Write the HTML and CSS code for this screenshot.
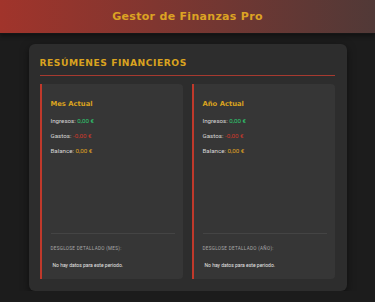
FILE: index.html
```html
<!DOCTYPE html>
<html>
<head>
    <title>Gestor de Finanzas Pro</title>
    <link rel="stylesheet" href="styles.css">
</head>
<body>

<header class="top-bar">
    <h1>Gestor de Finanzas Pro</h1>
</header>

<div class="container">
    <section class="card">
        <h2>Resúmenes Financieros</h2>

        <div class="summary-grid">
            <!-- Resumen del mes -->
            <div class="summary">
                <h3>Mes Actual</h3>
                <p>Ingresos: <span class="income">0,00 €</span></p>
                <p>Gastos: <span class="expense">-0,00 €</span></p>
                <p>Balance: <span class="balance">0,00 €</span></p>

                <div class="breakdown">
                    <h4>Desglose Detallado (Mes):</h4>
                    <p class="empty">No hay datos para este periodo.</p>
                </div>
            </div>

            <!-- Resumen del año -->
            <div class="summary">
                <h3>Año Actual</h3>
                <p>Ingresos: <span class="income">0,00 €</span></p>
                <p>Gastos: <span class="expense">-0,00 €</span></p>
                <p>Balance: <span class="balance">0,00 €</span></p>

                <div class="breakdown">
                    <h4>Desglose Detallado (Año):</h4>
                    <p class="empty">No hay datos para este periodo.</p>
                </div>
            </div>
        </div>
    </section>
</div>

</body>
</html>
```

FILE: styles.css
```css
body {
    margin: 0;
    background-color: #1c1c1c;
    font-family: Roboto, "Liberation Sans", sans-serif;
    color: #dcdcdc;
}
.top-bar {
    height: 33px;
    background: linear-gradient(90deg, #a1342b, #513937);
    border-bottom: 1px solid #161616;
    box-shadow: 0 2px 4px rgba(0, 0, 0, 0.4);
    display: flex;
    align-items: center;
    justify-content: center;
}
.top-bar h1 {
    margin: 0;
    font-family: "DejaVu Sans", sans-serif;
    font-size: 11px;
    font-weight: bold;
    color: #dca323;
    letter-spacing: 0.3px;
}
.container {
    width: 318px;
    margin: 10px auto 0;
}
.card {
    background-color: #2d2d2d;
    border-radius: 6px;
    padding: 13px 12px 12px 11px;
    box-shadow: 0 3px 8px rgba(0, 0, 0, 0.5);
}
.card h2 {
    margin: 0 0 8px;
    padding-bottom: 7px;
    font-family: "DejaVu Sans", sans-serif;
    font-size: 9.2px;
    font-weight: bold;
    text-transform: uppercase;
    letter-spacing: 0.5px;
    color: #d9a21f;
    border-bottom: 1px solid #a63a30;
}
.summary-grid {
    display: grid;
    grid-template-columns: 1fr 1fr;
    gap: 9px;
}
.summary {
    min-height: 195px;
    box-sizing: border-box;
    background-color: #363636;
    border-left: 2px solid #c0392b;
    border-radius: 0 4px 4px 0;
    padding: 15.5px 8px 10px 9px;
    display: flex;
    flex-direction: column;
}
.summary h3 {
    margin: 0 0 6px;
    font-family: "DejaVu Sans", sans-serif;
    font-size: 6.8px;
    line-height: 8px;
    font-weight: bold;
    color: #d9a21f;
}
.summary p {
    margin: 0;
    font-size: 6.2px;
    line-height: 15px;
    color: #d6d6d6;
}
.income {
    color: #2ecc71;
}
.expense {
    color: #d0392b;
}
.balance {
    color: #e0a521;
}
.breakdown {
    margin-top: auto;
    border-top: 1px solid #444;
    padding-top: 12px;
}
.breakdown h4 {
    margin: 0 0 9px;
    font-size: 4.6px;
    line-height: 6px;
    font-weight: normal;
    text-transform: uppercase;
    letter-spacing: 0.3px;
    color: #a8a8a8;
}
.summary .empty {
    font-size: 5px;
    line-height: 8px;
    padding-left: 2px;
    color: #e6e6e6;
}
```
